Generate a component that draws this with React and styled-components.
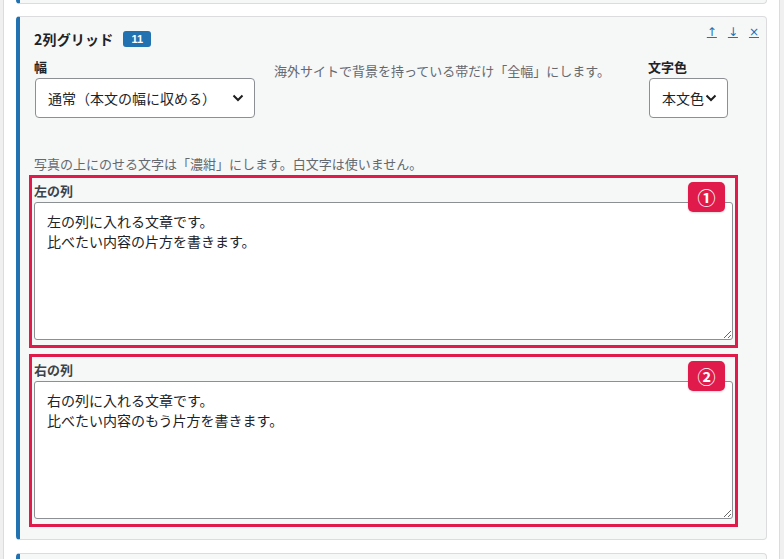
import React from "react";
import styled, { createGlobalStyle } from "styled-components";

const colors = {
  blue: "#2271b1",
  red: "#e01b4c",
  border: "#dcdcde",
  field: "#8c8f94",
  text: "#1d2327",
  muted: "#646970",
  card: "#f6f7f7",
};

const GlobalStyle = createGlobalStyle`
  html, body {
    margin: 0;
    padding: 0;
    background: #f0f0f1;
  }
  body {
    font-family: "Noto Sans CJK JP", "Liberation Sans", sans-serif;
    color: ${colors.text};
  }
`;

const Panel = styled.div`
  margin-left: 3px;
  width: 777px;
  height: 559px;
  box-sizing: border-box;
  background: #fff;
  border-left: 1px solid ${colors.border};
  border-right: 1px solid ${colors.border};
  padding: 0 12px;
  display: flex;
  flex-direction: column;
  gap: 12px;
  overflow: hidden;
`;

const PeekCard = styled.div`
  flex: none;
  height: 3px;
  background: ${colors.card};
  border: 1px solid ${colors.border};
  border-top: none;
  border-left: 4px solid ${colors.blue};
  border-radius: 0 0 4px 4px;
  margin-top: ${({ $bottom }) => ($bottom ? "1px" : "0")};
  ${({ $bottom }) =>
    $bottom &&
    `height: 10px; border-top: 1px solid ${colors.border}; border-bottom: none; border-radius: 4px 4px 0 0;`}
`;

const Card = styled.section`
  flex: none;
  background: ${colors.card};
  border: 1px solid ${colors.border};
  border-left: 4px solid ${colors.blue};
  border-radius: 4px;
  padding: 12px 33px 17px 14px;
  display: flex;
  flex-direction: column;
`;

const Header = styled.div`
  display: flex;
  align-items: center;
  height: 20px;
`;

const Title = styled.h3`
  margin: 0;
  font-size: 14px;
  font-weight: 700;
  line-height: 20px;
  letter-spacing: 0.2px;
`;

const Count = styled.span`
  margin-left: 10px;
  background: ${colors.blue};
  color: #fff;
  font-family: "Liberation Sans", sans-serif;
  font-size: 11px;
  font-weight: 700;
  line-height: 16px;
  height: 16px;
  padding: 0 8px;
  border-radius: 3px;
`;

const Actions = styled.div`
  margin-left: auto;
  margin-right: -26px;
  align-self: flex-start;
  margin-top: -5px;
  display: flex;
  gap: 11px;
`;

const ActionLink = styled.a`
  color: ${colors.blue};
  font-family: "DejaVu Sans", sans-serif;
  font-size: 12px;
  line-height: 16px;
  text-decoration: underline;
  cursor: pointer;
`;

const FieldsRow = styled.div`
  display: grid;
  grid-template-columns: 221px 1fr 80px;
  column-gap: 19px;
  margin-top: 9px;
  padding-right: 5px;
`;

const Field = styled.div`
  display: flex;
  flex-direction: column;
`;

const Label = styled.label`
  font-size: 13px;
  font-weight: 700;
  line-height: 18px;
  margin-bottom: 2px;
`;

const SelectBox = styled.div`
  height: 40px;
  box-sizing: border-box;
  background: #fff;
  border: 1px solid ${colors.field};
  border-radius: 4px;
  display: flex;
  align-items: center;
  justify-content: ${({ $tight }) => ($tight ? "flex-start" : "space-between")};
  gap: 1px;
  padding: 0 ${({ $tight }) => ($tight ? "8px" : "10px")} 0 12px;
  margin-left: 1px;
  font-size: 14px;
  line-height: 20px;
`;

const Note = styled.p`
  margin: ${({ $top }) => $top || "0"};
  font-size: 13px;
  line-height: 18px;
  color: ${colors.muted};
`;

const Block = styled.div`
  position: relative;
  margin-top: ${({ $first }) => ($first ? "7px" : "16px")};
  outline: 3px solid ${colors.red};
  outline-offset: 2px;
  padding-bottom: 3px;
  display: flex;
  flex-direction: column;
`;

const BlockLabel = styled.label`
  font-size: 13px;
  font-weight: 700;
  line-height: 16px;
  margin: 3px 0 3px;
  color: #3c434a;
`;

const TextArea = styled.textarea`
  display: block;
  box-sizing: border-box;
  width: 100%;
  height: 138px;
  margin: 0;
  padding: 8px 12px;
  background: #fff;
  border: 1px solid ${colors.field};
  border-radius: 3px;
  font-family: "Noto Sans CJK JP", sans-serif;
  font-size: 14px;
  line-height: 20px;
  color: ${colors.text};
  resize: vertical;
`;

const Marker = styled.span`
  position: absolute;
  top: 2px;
  right: 8px;
  width: 37px;
  height: 30px;
  border-radius: 5px;
  background: ${colors.red};
  color: #fff;
  font-size: 18px;
  font-weight: 700;
  display: flex;
  align-items: center;
  justify-content: center;
  box-shadow: 0 1px 2px rgba(0, 0, 0, 0.15);
`;

const Chevron = () => (
  <svg width="12" height="8" viewBox="0 0 12 8" aria-hidden="true">
    <path d="M1.5 1.5 L6 6 L10.5 1.5" fill="none" stroke="#1e1e1e" strokeWidth="2" />
  </svg>
);

const columns = [
  { label: "左の列", mark: "①", text: "左の列に入れる文章です。\n比べたい内容の片方を書きます。" },
  { label: "右の列", mark: "②", text: "右の列に入れる文章です。\n比べたい内容のもう片方を書きます。" },
];

export default function App() {
  return (
    <>
      <GlobalStyle />
      <Panel>
        <PeekCard />
        <Card>
          <Header>
            <Title>2列グリッド</Title>
            <Count>11</Count>
            <Actions>
              <ActionLink>↑</ActionLink>
              <ActionLink>↓</ActionLink>
              <ActionLink>×</ActionLink>
            </Actions>
          </Header>

          <FieldsRow>
            <Field>
              <Label>幅</Label>
              <SelectBox>
                通常（本文の幅に収める）
                <Chevron />
              </SelectBox>
            </Field>
            <Note $top="4px 0 0">海外サイトで背景を持っている帯だけ「全幅」にします。</Note>
            <Field>
              <Label>文字色</Label>
              <SelectBox $tight>
                本文色
                <Chevron />
              </SelectBox>
            </Field>
          </FieldsRow>

          <Note $top="37px 0 0">写真の上にのせる文字は「濃紺」にします。白文字は使いません。</Note>

          {columns.map((col, i) => (
            <Block key={col.label} $first={i === 0}>
              <BlockLabel>{col.label}</BlockLabel>
              <TextArea defaultValue={col.text} />
              <Marker>{col.mark}</Marker>
            </Block>
          ))}
        </Card>
        <PeekCard $bottom />
      </Panel>
    </>
  );
}
